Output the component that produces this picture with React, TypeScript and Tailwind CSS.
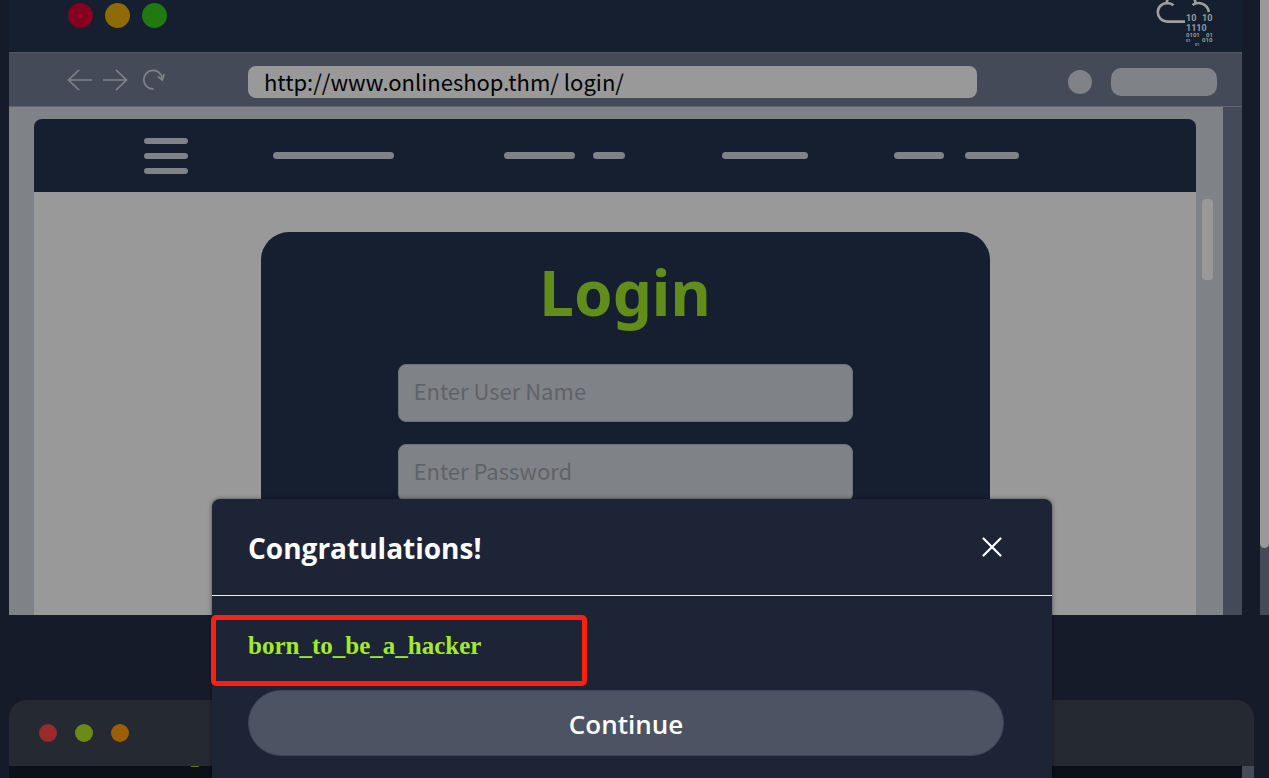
import React from "react";

const SOURCE = "font-['Noto_Sans_CJK_SC','Noto_Sans',sans-serif]";

function CloudLogo() {
  return (
    <svg
      width="60"
      height="48"
      viewBox="0 0 60 48"
      role="img"
      aria-label="Cloud logo"
      className="font-['Roboto',sans-serif]"
    >
      <g fill="none" stroke="#a09f9f" strokeWidth="2.6" strokeLinecap="butt">
        <path d="M29 21.6H11.5C5.4 21.6 1.8 17 1.8 12.2C1.8 7 6 3.2 11 3C13.700 3 15.800 3.700 17.500 5.200" />
        <path d="M10.500 3.500C10.800 1.500 11.200 0 12 -1.500" />
        <path d="M36.500 5C42 1 51.500 3.200 52.800 12" />
        <path d="M40 3.500C39.500 2 39 1 38.500 -1" />
      </g>
      <g fill="#96999f" fontWeight="700">
        <text x="30" y="21" fontSize="9">10</text>
        <text x="46" y="21" fontSize="9">10</text>
        <text x="30" y="31" fontSize="9">1110</text>
        <text x="30" y="37" fontSize="6">0101</text>
        <text x="50" y="37" fontSize="6">01</text>
        <text x="30" y="42" fontSize="4">01</text>
        <text x="46" y="42" fontSize="6">010</text>
        <text x="39" y="46" fontSize="4">01</text>
      </g>
    </svg>
  );
}

function ArrowLeft() {
  return (
    <svg width="26" height="24" viewBox="0 0 26 24" fill="none" stroke="#7f8286" strokeWidth="1.7">
      <path d="M25 12H1.500M12 2L1.500 12L12 22" />
    </svg>
  );
}

function ArrowRight() {
  return (
    <svg width="26" height="24" viewBox="0 0 26 24" fill="none" stroke="#7f8286" strokeWidth="1.7">
      <path d="M0 12H23.500M13 2L23.500 12L13 22" />
    </svg>
  );
}

function Reload() {
  return (
    <svg width="26" height="24" viewBox="0 0 26 24" fill="none" stroke="#7f8286" strokeWidth="1.8">
      <path d="M14.500 21A9.300 9.300 0 1 1 23.300 11" />
      <path d="M19 8.500L23.300 12L25.200 6" />
    </svg>
  );
}

function SiteNav() {
  return (
    <nav aria-label="Site" className="flex h-[73px] items-center rounded-t-lg bg-[#151f30] pl-[110px]">
      <button type="button" aria-label="Menu" className="flex w-11 flex-col gap-[9px]">
        <span className="h-[6px] rounded-full bg-[#7f8286]" />
        <span className="h-[6px] rounded-full bg-[#7f8286]" />
        <span className="h-[6px] rounded-full bg-[#7f8286]" />
      </button>
      <span className="ml-[85px] h-[7px] w-[121px] rounded-full bg-[#7f8286]" />
      <span className="ml-[110px] h-[7px] w-[71px] rounded-full bg-[#7f8286]" />
      <span className="ml-[18px] h-[7px] w-8 rounded-full bg-[#7f8286]" />
      <span className="ml-[97px] h-[7px] w-[86px] rounded-full bg-[#7f8286]" />
      <span className="ml-[86px] h-[7px] w-[50px] rounded-full bg-[#7f8286]" />
      <span className="ml-[21px] h-[7px] w-[54px] rounded-full bg-[#7f8286]" />
    </nav>
  );
}

function LoginCard() {
  const field = `h-[58px] w-full rounded-lg border border-[#6b7079] bg-[#7f8286] px-[15px] pb-[6px] text-[22px] text-[#5f6368] placeholder:text-[#5f6368] ${SOURCE}`;
  return (
    <form className="mx-auto mt-10 flex w-[729px] flex-col items-center rounded-[28px] bg-[#151f30] px-[137px] pb-20">
      <h1 className="mt-3 mb-6 font-['Noto_Sans',sans-serif] text-[62px] leading-[96px] font-bold text-[#628d1a]">
        Login
      </h1>
      <div className="flex w-full flex-col gap-[22px]">
        <input aria-label="User name" type="text" placeholder="Enter User Name" className={field} />
        <input aria-label="Password" type="password" placeholder="Enter Password" className={field} />
      </div>
    </form>
  );
}

function BrowserWindow() {
  return (
    <section className="mr-[18px] ml-[9px] flex h-[615px] flex-1 flex-col overflow-hidden bg-[#454a58]">
      <header className="flex h-[52px] shrink-0 items-start justify-between bg-[#151f30] pr-[26px] pl-[59px]">
        <div className="flex gap-3 pt-[3px]">
          <span className="size-[25px] rounded-full bg-[#86001f]" />
          <span className="size-[25px] rounded-full bg-[#8f6b08]" />
          <span className="size-[25px] rounded-full bg-[#217911]" />
        </div>
        <CloudLogo />
      </header>
      <div className="flex h-[55px] shrink-0 items-center border-t border-b border-t-[#535664] border-b-[#62666f] pr-[25px] pl-[58px]">
        <div className="flex items-center gap-[10px]">
          <button type="button" aria-label="Back"><ArrowLeft /></button>
          <button type="button" aria-label="Forward"><ArrowRight /></button>
          <button type="button" aria-label="Reload"><Reload /></button>
        </div>
        <input
          aria-label="Address"
          type="text"
          defaultValue="http://www.onlineshop.thm/ login/"
          className={`mt-[5px] ml-[83px] h-8 w-[729px] rounded-lg bg-[#999999] px-4 pb-px text-[22px] text-black ${SOURCE}`}
        />
        <span className="mt-[5px] ml-auto size-6 rounded-full bg-[#7f8286]" />
        <span className="mt-[5px] ml-[19px] h-7 w-[106px] rounded-[10px] bg-[#7f8286]" />
      </div>
      <div className="mr-[19px] flex min-h-0 flex-1 overflow-hidden bg-[#7f8286] pt-3 pl-[25px]">
        <div className="flex-1 bg-[#7f8286]">
          <SiteNav />
          <div className="min-h-full overflow-hidden bg-[#999999] pl-5">
            <LoginCard />
          </div>
        </div>
        <span className="mt-20 mr-[10px] ml-[6px] h-[81px] w-[11px] rounded-[4px] bg-[#999999]" />
      </div>
    </section>
  );
}

function TerminalWindow() {
  return (
    <section className="mr-[15px] ml-[9px] flex-1 overflow-hidden rounded-t-[18px] bg-[#252931]">
      <div className="flex h-[66px] items-center gap-[18px] pl-[30px]">
        <span className="size-[18px] rounded-full bg-[#9a2a2b]" />
        <span className="size-[18px] rounded-full bg-[#6b8a1a]" />
        <span className="size-[18px] rounded-full bg-[#9c5f05]" />
      </div>
      <div className="flex h-full items-start bg-[#454a58] pr-3">
        <div className="flex h-full flex-1 bg-[#0c1018] pl-[182px]">
          <span className="h-px w-2 bg-[#4f7f16]" />
        </div>
      </div>
    </section>
  );
}

function Modal() {
  return (
    <div className="absolute inset-0 flex items-end justify-center pr-[5px]">
      <div
        role="dialog"
        aria-labelledby="dialog-title"
        className="relative w-full max-w-[840px] rounded-t-lg bg-[#1c2436] font-['Open_Sans',sans-serif] shadow-[0_0_4px_rgba(0,0,0,0.5)]"
      >
        <div className="flex h-[97px] items-center justify-between border-b border-[#e8ebf0] pr-12 pl-9">
          <h2 id="dialog-title" className="pt-0.5 text-[28px] font-bold text-white">
            Congratulations!
          </h2>
          <button type="button" aria-label="Close" className="flex size-6 items-center justify-center">
            <svg width="22" height="22" viewBox="0 0 22 22" fill="none" stroke="#fff" strokeWidth="2.2" strokeLinecap="round">
              <path d="M2.500 2.500L19.500 19.500M19.500 2.500L2.500 19.500" />
            </svg>
          </button>
        </div>
        <div className="pt-8 pr-12 pb-[22px] pl-9">
          <p className="font-['Liberation_Serif',serif] text-[25px] leading-9 font-bold text-[#a3ea2a]">
            born_to_be_a_hacker
          </p>
          <button
            type="button"
            className="mt-[26px] h-[66px] w-full rounded-full border border-[#3c4555] bg-[#4c5463] pt-0.5 text-[26px] font-semibold text-white"
          >
            Continue
          </button>
        </div>
        <div className="pointer-events-none absolute top-[116px] -left-px h-[71px] w-[376px] rounded-[5px] border-[5px] border-[#ff2012]" />
      </div>
    </div>
  );
}

export default function App() {
  return (
    <main className="relative flex h-screen flex-col overflow-hidden bg-[#151b28]">
      <div className="flex shrink-0">
        <BrowserWindow />
        <div className="w-[9px] bg-[#454a58]">
          <div className="h-[548px] rounded-b-[5px] bg-[#999999]" />
        </div>
      </div>
      <div className="mt-[85px] flex min-h-0 flex-1">
        <TerminalWindow />
      </div>
      <Modal />
    </main>
  );
}
